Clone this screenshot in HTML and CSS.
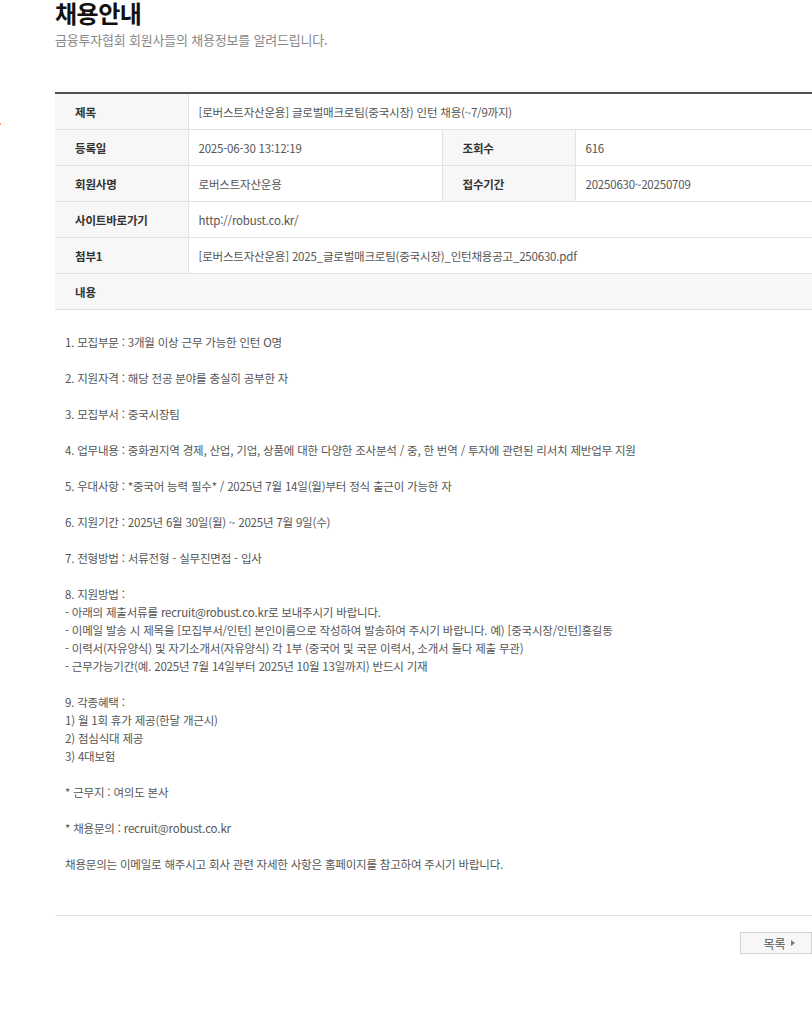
FILE: index.html
```html
<!DOCTYPE html>
<html lang="ko">
<head>
<meta charset="utf-8">
<title>채용안내</title>
<link rel="stylesheet" href="styles.css">
</head>
<body>
<span class="edge-dot"></span>
<div class="wrap">
  <h1 class="title">채용안내</h1>
  <p class="subtitle">금융투자협회 회원사들의 채용정보를 알려드립니다.</p>

  <table class="info">
    <colgroup>
      <col class="c-label">
      <col class="c-val1">
      <col class="c-label2">
      <col class="c-val2">
    </colgroup>
    <tr>
      <th>제목</th>
      <td colspan="3">[로버스트자산운용] 글로벌매크로팀(중국시장) 인턴 채용(~7/9까지)</td>
    </tr>
    <tr>
      <th>등록일</th>
      <td>2025-06-30 13:12:19</td>
      <th>조회수</th>
      <td>616</td>
    </tr>
    <tr>
      <th>회원사명</th>
      <td>로버스트자산운용</td>
      <th>접수기간</th>
      <td>20250630~20250709</td>
    </tr>
    <tr>
      <th>사이트바로가기</th>
      <td colspan="3">http://robust.co.kr/</td>
    </tr>
    <tr>
      <th>첨부1</th>
      <td colspan="3">[로버스트자산운용] 2025_글로벌매크로팀(중국시장)_인턴채용공고_250630.pdf</td>
    </tr>
    <tr class="content-head">
      <th>내용</th>
      <td colspan="3"></td>
    </tr>
  </table>

  <div class="content">
    1. 모집부문 : 3개월 이상 근무 가능한 인턴 O명<br><br>
    2. 지원자격 : 해당 전공 분야를 충실히 공부한 자<br><br>
    3. 모집부서 : 중국시장팀<br><br>
    4. 업무내용 : 중화권지역 경제, 산업, 기업, 상품에 대한 다양한 조사분석 / 중, 한 번역 / 투자에 관련된 리서치 제반업무 지원<br><br>
    5. 우대사항 : *중국어 능력 필수* / 2025년 7월 14일(월)부터 정식 출근이 가능한 자<br><br>
    6. 지원기간 : 2025년 6월 30일(월) ~ 2025년 7월 9일(수)<br><br>
    7. 전형방법 : 서류전형 - 실무진면접 - 입사<br><br>
    8. 지원방법 :<br>
    - 아래의 제출서류를 recruit@robust.co.kr로 보내주시기 바랍니다.<br>
    - 이메일 발송 시 제목을 [모집부서/인턴] 본인이름으로 작성하여 발송하여 주시기 바랍니다. 예) [중국시장/인턴]홍길동<br>
    - 이력서(자유양식) 및 자기소개서(자유양식) 각 1부 (중국어 및 국문 이력서, 소개서 둘다 제출 무관)<br>
    - 근무가능기간(예. 2025년 7월 14일부터 2025년 10월 13일까지) 반드시 기재<br><br>
    9. 각종혜택 :<br>
    1) 월 1회 휴가 제공(한달 개근시)<br>
    2) 점심식대 제공<br>
    3) 4대보험<br><br>
    * 근무지 : 여의도 본사<br><br>
    * 채용문의 : recruit@robust.co.kr<br><br>
    채용문의는 이메일로 해주시고 회사 관련 자세한 사항은 홈페이지를 참고하여 주시기 바랍니다.
  </div>

  <div class="btn-row">
    <a class="btn-list" href="#">목록 <span class="tri"></span></a>
  </div>
</div>
</body>
</html>
```

FILE: styles.css
```css
html, body {
  margin: 0;
  padding: 0;
  background: #fff;
}
body {
  font-family: "Noto Sans CJK KR", "Noto Sans", sans-serif;
  color: #555;
  font-size: 12px;
  overflow-x: hidden;
  position: relative;
}
.edge-dot {
  position: absolute;
  left: 0;
  top: 123px;
  width: 1px;
  height: 2px;
  background: #f6a07a;
}
.wrap {
  margin-left: 55px;
  width: 757px;
  padding-top: 1px;
}
.title {
  margin: 0;
  font-size: 24px;
  line-height: 24px;
  font-weight: 700;
  color: #111;
  letter-spacing: -0.5px;
}
.subtitle {
  margin: 6px 0 0 0;
  font-size: 13px;
  line-height: 18px;
  color: #888;
  letter-spacing: -0.2px;
}
.info {
  margin-top: 43px;
  width: 100%;
  border-collapse: collapse;
  table-layout: fixed;
  border-top: 2px solid #505050;
}
.c-label { width: 133px; }
.c-val1 { width: 254px; }
.c-label2 { width: 133px; }
.c-val2 { width: auto; }
.info th,
.info td {
  height: 35px;
  padding: 0;
  border-bottom: 1px solid #e3e3e3;
  font-size: 11.5px;
  line-height: 18px;
  letter-spacing: -0.2px;
  text-align: left;
  vertical-align: middle;
  white-space: nowrap;
}
.info th {
  background: #f7f7f7;
  color: #333;
  font-weight: 700;
  padding-left: 20px;
  border-right: 1px solid #e3e3e3;
}
.info td {
  color: #555;
  padding-left: 10px;
  border-right: 1px solid #e3e3e3;
}
.info td:last-child {
  border-right: 0;
}
.content-head th,
.content-head td {
  background: #f7f7f7;
  border-right: 0;
}
.content {
  padding: 23px 10px 42px 10px;
  line-height: 18px;
  font-size: 11.5px;
  letter-spacing: -0.2px;
  color: #555;
  border-bottom: 1px solid #e3e3e3;
}
.btn-row {
  display: flex;
  justify-content: flex-end;
  margin-top: 16px;
}
.btn-list {
  display: flex;
  align-items: center;
  justify-content: center;
  gap: 5px;
  box-sizing: border-box;
  width: 72px;
  height: 22px;
  padding-left: 6px;
  border: 1px solid #d3d3d3;
  background: #f7f7f7;
  color: #555;
  font-size: 12px;
  text-decoration: none;
}
.tri {
  width: 0;
  height: 0;
  border-top: 3px solid transparent;
  border-bottom: 3px solid transparent;
  border-left: 4px solid #777;
}
```
